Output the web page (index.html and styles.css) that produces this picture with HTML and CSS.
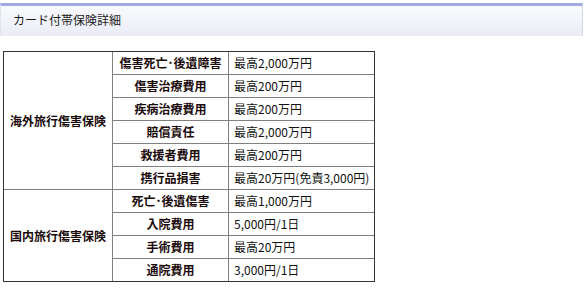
FILE: index.html
```html
<!DOCTYPE html>
<html lang="ja">
<head>
<meta charset="utf-8">
<title>カード付帯保険詳細</title>
<link rel="stylesheet" href="styles.css">
</head>
<body>
<div class="page">
  <h2 class="title">カード付帯保険詳細</h2>
  <table class="ins">
    <colgroup>
      <col class="c1"><col class="c2"><col class="c3">
    </colgroup>
    <tbody>
      <tr>
        <th class="group" rowspan="6">海外旅行傷害保険</th>
        <th class="item">傷害死亡･後遺障害</th>
        <td class="val">最高2,000万円</td>
      </tr>
      <tr><th class="item">傷害治療費用</th><td class="val">最高200万円</td></tr>
      <tr><th class="item">疾病治療費用</th><td class="val">最高200万円</td></tr>
      <tr><th class="item">賠償責任</th><td class="val">最高2,000万円</td></tr>
      <tr><th class="item">救援者費用</th><td class="val">最高200万円</td></tr>
      <tr><th class="item">携行品損害</th><td class="val">最高20万円(免責3,000円)</td></tr>
      <tr class="last-group-start">
        <th class="group last" rowspan="4">国内旅行傷害保険</th>
        <th class="item">死亡･後遺傷害</th>
        <td class="val">最高1,000万円</td>
      </tr>
      <tr><th class="item">入院費用</th><td class="val">5,000円/1日</td></tr>
      <tr><th class="item">手術費用</th><td class="val">最高20万円</td></tr>
      <tr class="last-row"><th class="item">通院費用</th><td class="val">3,000円/1日</td></tr>
    </tbody>
  </table>
</div>
</body>
</html>
```

FILE: styles.css
```css
html, body {
  margin: 0;
  padding: 0;
  background: #ffffff;
}

body {
  font-family: "Noto Sans CJK JP", "Noto Sans", "Liberation Sans", sans-serif;
  font-size: 12px;
  color: #111111;
}

.page {
  padding-top: 3px;
  width: 583px;
}

.title {
  margin: 0;
  box-sizing: border-box;
  width: 583px;
  height: 33px;
  padding: 0 0 0 12px;
  border-top: 3px solid #a2aae3;
  border-left: 1px solid #e2e4ec;
  border-right: 1px solid #d6d8e0;
  background: linear-gradient(to bottom, #f9fafd 0%, #f2f3fa 50%, #eaecf7 100%);
  font-size: 12px;
  font-weight: normal;
  line-height: 28px;
  color: #1a1a1a;
}

.ins {
  margin: 15px 0 0 3px;
  border-collapse: separate;
  border-spacing: 0;
  border: 1px solid #333333;
  table-layout: fixed;
  width: 372px;
}

.c1 { width: 109px; }
.c2 { width: 116px; }
.c3 { width: 145px; }

.ins th,
.ins td {
  height: 22px;
  padding: 0 5px;
  line-height: 22px;
  border-right: 1px solid #808080;
  border-bottom: 1px solid #808080;
  white-space: nowrap;
  overflow: hidden;
}

.ins th {
  font-weight: bold;
  text-align: center;
  color: #1a0a0a;
}

.ins .group {
  vertical-align: middle;
  padding: 0;
}

.ins .item {
  padding: 0;
}

.ins td.val {
  text-align: left;
  border-right: none;
  color: #111111;
}

.ins .group.last,
.ins .last-row th,
.ins .last-row td {
  border-bottom: none;
}
```
